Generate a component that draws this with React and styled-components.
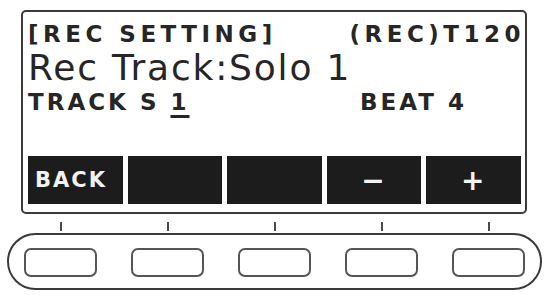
import React from "react";
import styled, { createGlobalStyle } from "styled-components";

const GlobalStyle = createGlobalStyle`
  html, body {
    margin: 0;
    padding: 0;
    background: #ffffff;
  }
`;

const Device = styled.div`
  width: 548px;
  height: 295px;
  box-sizing: border-box;
  padding-top: 10px;
  display: flex;
  flex-direction: column;
  font-family: "DejaVu Sans", "Liberation Sans", sans-serif;
  color: #262626;
`;

const Screen = styled.div`
  margin-left: 21px;
  width: 506px;
  height: 204px;
  box-sizing: border-box;
  border: 2px solid #3a3a3a;
  border-radius: 5px;
  padding: 9px 4px 8px 5px;
  display: flex;
  flex-direction: column;
`;

const HeaderRow = styled.div`
  display: flex;
  justify-content: space-between;
  font-size: 23px;
  font-weight: bold;
  line-height: 26px;
  letter-spacing: 4.5px;
  white-space: nowrap;

  & > span:last-child {
    margin-right: -4px;
  }
`;

const TitleRow = styled.div`
  margin-top: 5px;
  font-size: 36px;
  line-height: 32px;
  letter-spacing: 1.8px;
  white-space: nowrap;
`;

const InfoRow = styled.div`
  margin-top: 5px;
  display: grid;
  grid-template-columns: 332px 1fr;
  font-size: 23px;
  font-weight: bold;
  line-height: 26px;
  letter-spacing: 3px;
  white-space: nowrap;
`;

const Cursor = styled.span`
  text-decoration: underline;
  text-underline-offset: 5px;
  text-decoration-thickness: 3px;
`;

const SoftKeys = styled.div`
  margin-top: auto;
  display: grid;
  grid-template-columns: repeat(5, 1fr);
  gap: 5px;
  height: 48px;
`;

const SoftKey = styled.div`
  background: #1c1c1c;
  color: #f2f2f2;
  display: flex;
  align-items: center;
  justify-content: ${(p) => (p.$left ? "flex-start" : "center")};
  padding-left: ${(p) => (p.$left ? "7px" : "0")};
  font-size: ${(p) => (p.$big ? "28px" : "21px")};
  font-weight: bold;
  letter-spacing: 2px;
`;

const TickRow = styled.div`
  margin-top: 8px;
  margin-left: 24px;
  display: flex;
  gap: 34px;
`;

const TickSlot = styled.div`
  width: 73px;
  height: 9px;
  display: flex;
  justify-content: center;
`;

const Tick = styled.div`
  width: 2px;
  height: 100%;
  background: #4a4a4a;
`;

const ButtonStrip = styled.div`
  margin-top: 2px;
  margin-left: 7px;
  width: 535px;
  height: 57px;
  box-sizing: border-box;
  border: 2px solid #3a3a3a;
  border-radius: 29px;
  padding: 0 14px 0 15px;
  display: flex;
  align-items: center;
  gap: 34px;
`;

const HardButton = styled.div`
  width: 73px;
  height: 29px;
  box-sizing: border-box;
  border: 2px solid #555555;
  border-radius: 7px;
  margin-top: 2px;
`;

const keys = [
  { label: "BACK", left: true },
  { label: "" },
  { label: "" },
  { label: "−", big: true },
  { label: "+", big: true },
];

export default function App() {
  return (
    <>
      <GlobalStyle />
      <Device>
        <Screen>
          <HeaderRow>
            <span>[REC SETTING]</span>
            <span>(REC)T120</span>
          </HeaderRow>
          <TitleRow>Rec Track:Solo 1</TitleRow>
          <InfoRow>
            <span>
              TRACK S <Cursor>1</Cursor>
            </span>
            <span>BEAT 4</span>
          </InfoRow>
          <SoftKeys>
            {keys.map((k, i) => (
              <SoftKey key={i} $left={k.left} $big={k.big}>
                {k.label}
              </SoftKey>
            ))}
          </SoftKeys>
        </Screen>
        <TickRow>
          {keys.map((_, i) => (
            <TickSlot key={i}>
              <Tick />
            </TickSlot>
          ))}
        </TickRow>
        <ButtonStrip>
          {keys.map((_, i) => (
            <HardButton key={i} />
          ))}
        </ButtonStrip>
      </Device>
    </>
  );
}
